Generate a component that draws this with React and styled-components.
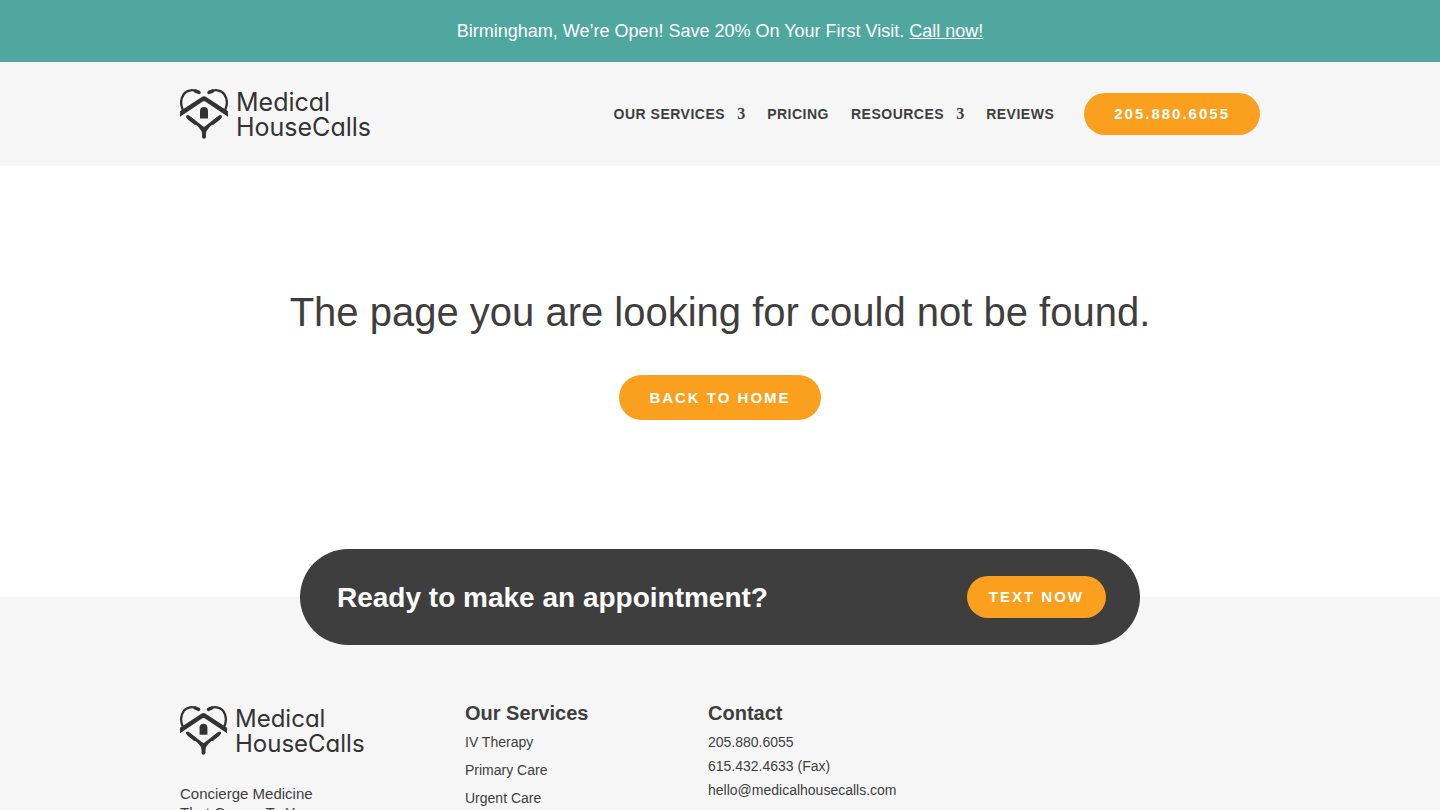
import React from "react";
import styled, { createGlobalStyle } from "styled-components";

const GlobalStyle = createGlobalStyle`
  * {
    box-sizing: border-box;
  }
  body {
    margin: 0;
    background: #ffffff;
    color: #3e3e3e;
    font-family: "Liberation Sans", Arial, Helvetica, sans-serif;
    font-size: 14px;
  }
  h1, h2, h3, p, ul {
    margin: 0;
    padding: 0;
  }
  ul {
    list-style: none;
  }
`;

const Banner = styled.div`
  padding: 20px;
  background: #4fa7a0;
  color: #ffffff;
  font-size: 18px;
  line-height: 22px;
  text-align: center;

  a {
    color: inherit;
  }
`;

const Container = styled.div`
  width: 75%;
  max-width: 1080px;
  margin: 0 auto;
`;

const Header = styled.header`
  padding: 26px 0;
  background: #f6f6f6;
`;

const HeaderRow = styled(Container)`
  display: flex;
  align-items: center;
  justify-content: space-between;
`;

const LogoLink = styled.a`
  display: flex;
  align-items: center;
  gap: 8px;
  color: #333333;
  text-decoration: none;
`;

const LogoText = styled.span`
  padding-top: 2px;
  font-family: Inter, sans-serif;
  font-size: ${(props) => (props.$small ? "24px" : "25px")};
  font-feature-settings: "cv11";
  line-height: 25px;
`;

const Nav = styled.nav`
  display: flex;
  align-items: center;
  gap: 30px;
`;

const Menu = styled.ul`
  display: flex;
  gap: 22px;
`;

const MenuLink = styled.a`
  display: flex;
  align-items: center;
  gap: 12px;
  color: #3e3e3e;
  font-size: 14px;
  font-weight: 700;
  line-height: 20px;
  letter-spacing: 0.5px;
  text-decoration: none;
  text-transform: uppercase;
`;

const Arrow = styled.span`
  font-family: "Liberation Serif", "Times New Roman", serif;
  font-size: 16px;
  letter-spacing: 0;
`;

const PillLink = styled.a`
  display: inline-block;
  padding: 12px ${(props) => (props.$narrow ? "22px" : "30px")};
  border-radius: 50px;
  background: #fa9f1e;
  color: #ffffff;
  font-size: 15px;
  font-weight: 700;
  line-height: ${(props) => (props.$tall ? "21px" : "18px")};
  letter-spacing: 2px;
  text-decoration: none;
  text-transform: uppercase;
  white-space: nowrap;
`;

const NotFound = styled.main`
  display: flex;
  flex-direction: column;
  align-items: center;
  gap: 39px;
  padding: 122px 20px 129px;
`;

const Title = styled.h1`
  font-size: 40px;
  font-weight: 400;
  line-height: 48px;
  text-align: center;
`;

const Footer = styled.footer`
  background: linear-gradient(#ffffff 48px, #f6f6f6 48px);
`;

const CallToAction = styled.section`
  display: flex;
  align-items: center;
  justify-content: space-between;
  max-width: 840px;
  margin: 0 auto;
  padding: 27px 34px 27px 37px;
  border-radius: 50px;
  background: #3e3e3e;
  color: #ffffff;
`;

const CallTitle = styled.h2`
  font-size: 28px;
  line-height: 35px;
`;

const FooterColumns = styled(Container)`
  display: grid;
  grid-template-columns: 285fr 243fr 552fr;
  padding: 59px 0 60px;
`;

const Tagline = styled.p`
  margin-top: 28px;
  font-size: 15px;
  line-height: 19px;
`;

const ColumnTitle = styled.h3`
  font-size: 20px;
  line-height: 18px;
`;

const LinkList = styled.ul`
  display: flex;
  flex-direction: column;
  gap: ${(props) => props.$gap}px;
  margin-top: 10px;
  line-height: 20px;

  a {
    color: inherit;
    text-decoration: none;
  }
`;

const Logo = ({ small }) => (
  <LogoLink href="#" aria-label="Medical HouseCalls">
    <svg
      width={small ? 47 : 48}
      height={small ? 49 : 50}
      viewBox="0 0.6 48 50"
      fill="none"
      stroke="currentColor"
      strokeLinecap="round"
      strokeLinejoin="round"
    >
      {/* stethoscope heart */}
      <path
        d="M18.800 3.400C13.500 .8 7.200 1.200 3.900 5.600C.6 10.300 .6 17 3.200 22.500"
        strokeWidth="2.300"
      />
      <path
        d="M29.200 3.400C34.500 .8 40.800 1.200 44.100 5.600C47.400 10.300 47.400 17 44.800 22.500L46 25"
        strokeWidth="2.300"
      />
      <path d="M15.500 2.700L19 4.100M32.500 2.700L29 4.100" strokeWidth="3.400" />
      {/* roof */}
      <path
        d="M0 22.800L21.800 8.500Q24 7.200 26.200 8.500L48 22.800V28.400L25.200 13.100Q24 12.400 22.800 13.100L0 28.400Z"
        fill="currentColor"
        stroke="none"
      />
      <path
        d="M20 30V22.600Q20 18.700 24 18.700Q28 18.700 28 22.600V30Z"
        fill="currentColor"
        stroke="none"
      />
      {/* tubes joining at the stem */}
      <path d="M7.600 28.200L24 40.600L40.400 28.200" strokeWidth="3.200" />
      <path d="M9 29.600L15 34.400M39 29.600L33 34.400" strokeWidth="3.800" />
      <path
        d="M15 34L24 39L33 34L27 42Q26 43.200 26 45H22Q22 43.200 21 42Z"
        fill="currentColor"
        stroke="none"
      />
      <path d="M24 42V48.300" strokeWidth="4" />
    </svg>
    <LogoText $small={small}>
      Medical
      <br />
      HouseCalls
    </LogoText>
  </LogoLink>
);

const menu = [
  { label: "Our Services", hasArrow: true },
  { label: "Pricing" },
  { label: "Resources", hasArrow: true },
  { label: "Reviews" },
];

const services = ["IV Therapy", "Primary Care", "Urgent Care"];

const App = () => {
  return (
    <>
      <GlobalStyle />
      <Banner>
        Birmingham, We’re Open! Save 20% On Your First Visit.{" "}
        <a href="tel:2058806055">Call now!</a>
      </Banner>
      <Header>
        <HeaderRow>
          <Logo />
          <Nav>
            <Menu>
              {menu.map((item) => (
                <li key={item.label}>
                  <MenuLink href="#">
                    {item.label}
                    {item.hasArrow && <Arrow>3</Arrow>}
                  </MenuLink>
                </li>
              ))}
            </Menu>
            <PillLink href="tel:2058806055">205.880.6055</PillLink>
          </Nav>
        </HeaderRow>
      </Header>
      <NotFound>
        <Title>The page you are looking for could not be found.</Title>
        <PillLink href="#" $tall>
          Back to Home
        </PillLink>
      </NotFound>
      <Footer>
        <CallToAction>
          <CallTitle>Ready to make an appointment?</CallTitle>
          <PillLink href="sms:2058806055" $narrow>
            Text Now
          </PillLink>
        </CallToAction>
        <FooterColumns>
          <div>
            <Logo small />
            <Tagline>
              Concierge Medicine
              <br />
              That Comes To You
            </Tagline>
          </div>
          <div>
            <ColumnTitle>Our Services</ColumnTitle>
            <LinkList $gap={8}>
              {services.map((service) => (
                <li key={service}>
                  <a href="#">{service}</a>
                </li>
              ))}
            </LinkList>
          </div>
          <div>
            <ColumnTitle>Contact</ColumnTitle>
            <LinkList $gap={4}>
              <li>
                <a href="tel:2058806055">205.880.6055</a>
              </li>
              <li>615.432.4633 (Fax)</li>
              <li>
                <a href="mailto:hello@medicalhousecalls.com">
                  hello@medicalhousecalls.com
                </a>
              </li>
            </LinkList>
          </div>
        </FooterColumns>
      </Footer>
    </>
  );
};

export default App;
